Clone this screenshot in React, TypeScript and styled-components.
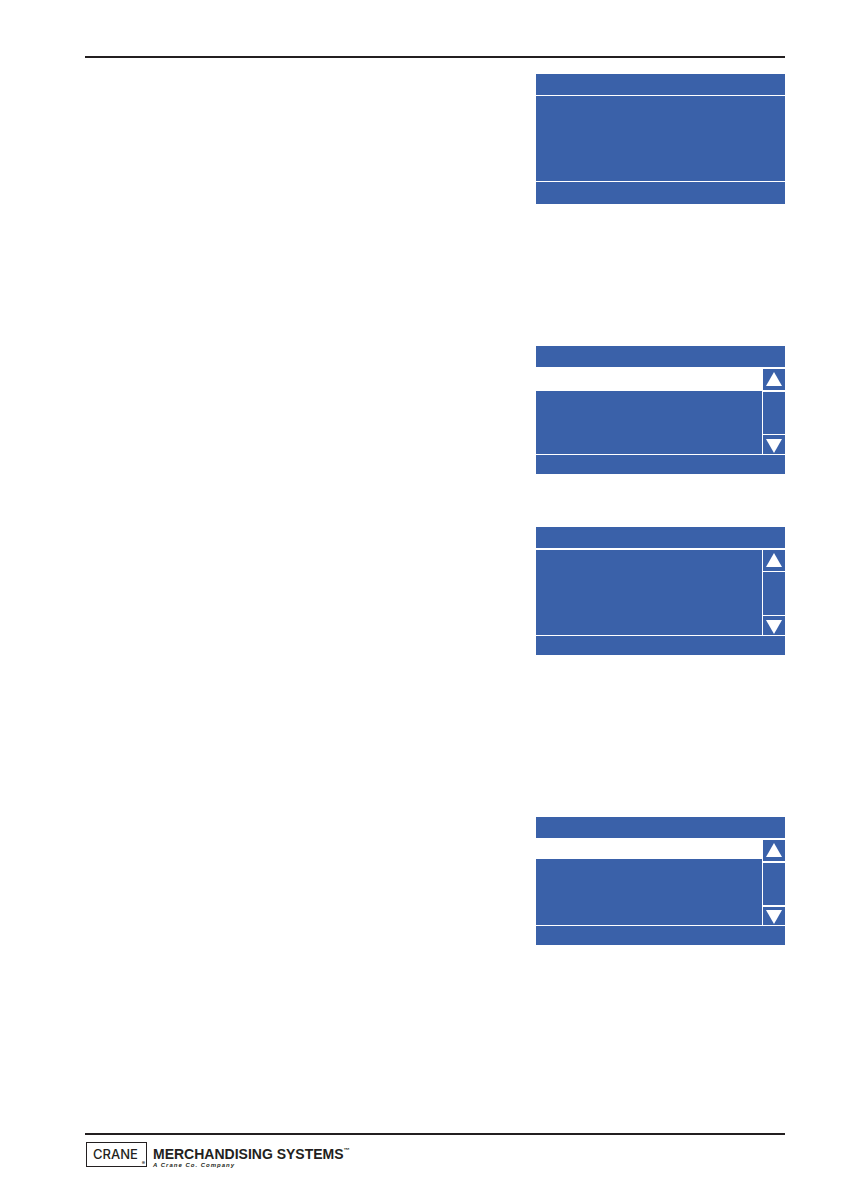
import React from 'react';
import styled, { createGlobalStyle } from 'styled-components';

const GlobalStyle = createGlobalStyle`
  *, *::before, *::after { box-sizing: border-box; }
  body {
    margin: 0;
    background: #ffffff;
    color: #231f20;
    font-family: "Liberation Sans", Arial, sans-serif;
  }
`;

const blue = '#3a61a9';

const Page = styled.div`
  display: flex;
  flex-direction: column;
  min-height: 100vh;
  padding: 56px 57px 23px 85px;
`;

const Rule = styled.hr`
  width: 100%;
  height: 2px;
  margin: 0;
  border: 0;
  background: #231f20;
`;

const Content = styled.main`
  display: flex;
  flex: 1;
  flex-direction: column;
  align-items: flex-end;
  padding-top: 16px;
`;

const Screen = styled.section<{ $after: number }>`
  display: flex;
  flex-direction: column;
  width: 249px;
  max-width: 100%;
  margin-bottom: ${(p) => p.$after}px;
`;

const Bar = styled.div<{ $height: number }>`
  height: ${(p) => p.$height}px;
  background: ${blue};
`;

const Body = styled.div<{ $top: number }>`
  display: flex;
  gap: 1px;
  height: 85px;
  margin: ${(p) => p.$top}px 0 1px;
`;

const List = styled.div`
  display: flex;
  flex: 1;
  flex-direction: column;
  background: ${blue};
`;

const Selected = styled.div<{ $height: number }>`
  height: ${(p) => p.$height}px;
  background: #ffffff;
`;

const Scroller = styled.div<{ $upper: number; $lower: number }>`
  display: flex;
  flex-direction: column;
  width: 22px;

  > :nth-child(2) { margin: ${(p) => p.$upper}px 0 ${(p) => p.$lower}px; }
`;

const Track = styled.div`
  flex: 1;
  background: ${blue};
`;

const ArrowButton = styled.button<{ $height: number; $down?: boolean }>`
  display: flex;
  align-items: center;
  justify-content: center;
  height: ${(p) => p.$height}px;
  padding: ${(p) => (p.$down ? '2px 0 0' : '0 0 2px')};
  border: 0;
  background: ${blue};
  cursor: pointer;

  svg { display: block; flex: none; fill: #ffffff; }
`;

const Footer = styled.footer`
  display: flex;
  align-items: flex-start;
  gap: 6px;
  padding: 7px 1px 0;
`;

const CraneMark = styled.div`
  display: flex;
  align-items: center;
  justify-content: space-between;
  width: 61px;
  height: 25px;
  padding: 0 1px 0 6px;
  border: 1px solid #231f20;
  font-family: Inter, "Liberation Sans", sans-serif;
  font-size: 13px;
  font-weight: 500;
  line-height: 23px;
`;

const Registered = styled.span`
  align-self: flex-end;
  font-size: 5px;
  font-weight: bold;
  line-height: 6px;
`;

const Wordmark = styled.div`
  display: flex;
  flex-direction: column;
  padding-top: 4px;
  font-weight: bold;
  white-space: nowrap;
`;

const Name = styled.div`
  display: flex;
  align-items: flex-start;
  font-size: 14px;
  line-height: 16px;
`;

const Trademark = styled.span`
  font-size: 6px;
  line-height: 8px;
`;

const Tagline = styled.div`
  font-size: 6px;
  font-style: italic;
  line-height: 6px;
  letter-spacing: 1px;
`;

interface MenuScreenProps {
  label: string;
  after: number;
  selected?: number;
  upper: number;
  lower: number;
  down: number;
}

function MenuScreen({ label, after, selected, upper, lower, down }: MenuScreenProps) {
  return (
    <Screen $after={after} aria-label={label}>
      <Bar $height={21} />
      <Body $top={2}>
        <List>{selected ? <Selected $height={selected} /> : null}</List>
        <Scroller $upper={upper} $lower={lower}>
          <ArrowButton $height={21} type="button" aria-label="Scroll up">
            <svg width="16" height="14" viewBox="0 0 16 14"><path d="M8 0 16 14H0Z" /></svg>
          </ArrowButton>
          <Track />
          <ArrowButton $height={down} $down type="button" aria-label="Scroll down">
            <svg width="16" height="14" viewBox="0 0 16 14"><path d="M0 0H16L8 14Z" /></svg>
          </ArrowButton>
        </Scroller>
      </Body>
      <Bar $height={19} />
    </Screen>
  );
}

export default function App() {
  return (
    <Page>
      <GlobalStyle />
      <Rule />
      <Content>
        <Screen $after={142} aria-label="Message display">
          <Bar $height={21} />
          <Body $top={1}><List /></Body>
          <Bar $height={22} />
        </Screen>
        <MenuScreen label="Menu display 1" after={53} selected={22} upper={2} lower={1} down={19} />
        <MenuScreen label="Menu display 2" after={162} upper={1} lower={1} down={19} />
        <MenuScreen label="Menu display 3" after={188} selected={19} upper={2} lower={2} down={18} />
      </Content>
      <Rule />
      <Footer>
        <CraneMark>
          CRANE<Registered>®</Registered>
        </CraneMark>
        <Wordmark>
          <Name>MERCHANDISING SYSTEMS<Trademark>™</Trademark></Name>
          <Tagline>A Crane Co. Company</Tagline>
        </Wordmark>
      </Footer>
    </Page>
  );
}
